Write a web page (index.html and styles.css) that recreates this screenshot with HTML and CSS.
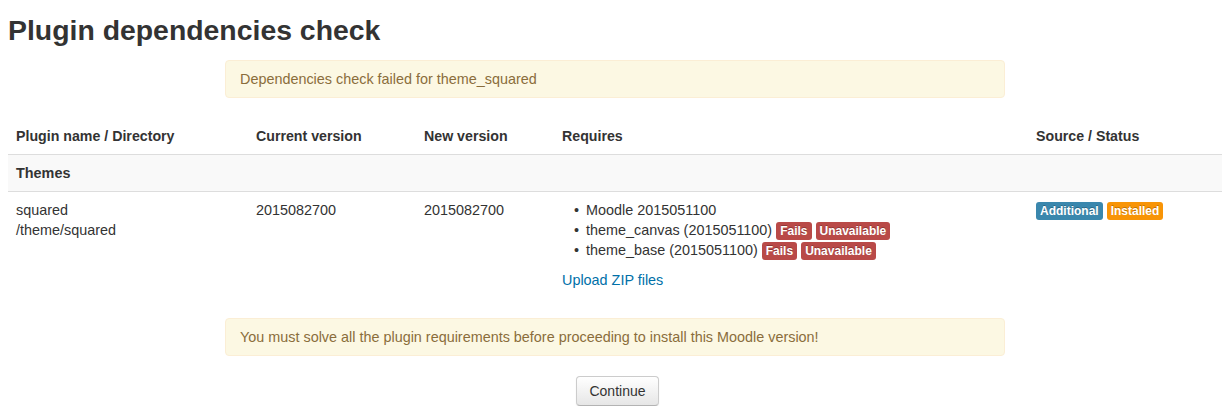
FILE: index.html
```html
<!DOCTYPE html>
<html>
<head>
<meta charset="utf-8">
<link rel="stylesheet" href="styles.css">
</head>
<body>
<div class="page">
  <h2 class="title">Plugin dependencies check</h2>
  <div class="alert">Dependencies check failed for theme_squared</div>
  <table class="plugins">
    <colgroup>
      <col class="c-name"><col class="c-cur"><col class="c-new"><col class="c-req"><col class="c-src">
    </colgroup>
    <thead>
      <tr>
        <th>Plugin name / Directory</th>
        <th>Current version</th>
        <th>New version</th>
        <th>Requires</th>
        <th>Source / Status</th>
      </tr>
    </thead>
    <tbody>
      <tr class="type-row">
        <th colspan="5">Themes</th>
      </tr>
      <tr>
        <td>squared<br>/theme/squared</td>
        <td>2015082700</td>
        <td>2015082700</td>
        <td>
          <ul class="reqs">
            <li>Moodle 2015051100</li>
            <li>theme_canvas (2015051100) <span class="label label-important">Fails</span> <span class="label label-important">Unavailable</span></li>
            <li>theme_base (2015051100) <span class="label label-important">Fails</span> <span class="label label-important">Unavailable</span></li>
          </ul>
          <a class="link" href="#">Upload ZIP files</a>
        </td>
        <td><span class="label label-info">Additional</span> <span class="label label-warning">Installed</span></td>
      </tr>
    </tbody>
  </table>
  <div class="alert">You must solve all the plugin requirements before proceeding to install this Moodle version!</div>
  <div class="buttons">
    <button class="btn" type="button">Continue</button>
  </div>
</div>
</body>
</html>
```

FILE: styles.css
```css
html, body {
  margin: 0;
  padding: 0;
  background: #fff;
}
body {
  font-family: "Liberation Sans", Arial, sans-serif;
  font-size: 14.4px;
  line-height: 20px;
  color: #333;
}
.page {
  padding: 0 10px 0 8px;
}
.title {
  margin: 10px 0;
  font-size: 28.4px;
  line-height: 40px;
  font-weight: bold;
  color: #333;
}
.alert {
  width: 750px;
  margin: 0 auto 20px;
  padding: 8px 14px;
  background: #fcf8e3;
  border: 1px solid #fbeed5;
  border-radius: 4px;
  color: #8a6d3b;
}
.plugins {
  width: 100%;
  table-layout: fixed;
  border-collapse: collapse;
  border-spacing: 0;
  margin-bottom: 20px;
}
.c-name { width: 240px; }
.c-cur { width: 168px; }
.c-new { width: 138px; }
.c-req { width: 474px; }
.c-src { width: 194px; }
.plugins th, .plugins td {
  padding: 8px;
  text-align: left;
  vertical-align: top;
  border-top: 1px solid #ddd;
}
.plugins thead th {
  border-top: 0;
  vertical-align: bottom;
  font-weight: bold;
  font-size: 14.2px;
}
.type-row th {
  background: #f9f9f9;
  font-weight: bold;
}
.reqs {
  margin: 0 0 10px 24px;
  padding: 0;
  list-style: none;
}
.reqs li::before {
  content: "\2022";
  display: inline-block;
  width: 12px;
  margin-left: -12px;
}
.link {
  color: #0070a8;
  text-decoration: none;
}
.label {
  display: inline-block;
  padding: 2px 4px;
  font-size: 12px;
  font-weight: bold;
  line-height: 14px;
  color: #fff;
  vertical-align: baseline;
  white-space: nowrap;
  text-shadow: 0 -1px 0 rgba(0,0,0,0.25);
  border-radius: 3px;
}
.label-important { background: #b94a48; }
.label-info { background: #3a87ad; }
.label-warning { background: #f89406; }
.buttons {
  text-align: center;
  padding-left: 5px;
}
.btn {
  display: inline-block;
  padding: 4px 12px;
  font-family: "Liberation Sans", Arial, sans-serif;
  font-size: 14px;
  line-height: 20px;
  color: #333;
  background-color: #f5f5f5;
  background-image: linear-gradient(to bottom, #fff, #e6e6e6);
  border: 1px solid #ccc;
  border-bottom-color: #b3b3b3;
  border-radius: 4px;
  box-shadow: inset 0 1px 0 rgba(255,255,255,0.2), 0 1px 2px rgba(0,0,0,0.05);
  cursor: pointer;
}
```
